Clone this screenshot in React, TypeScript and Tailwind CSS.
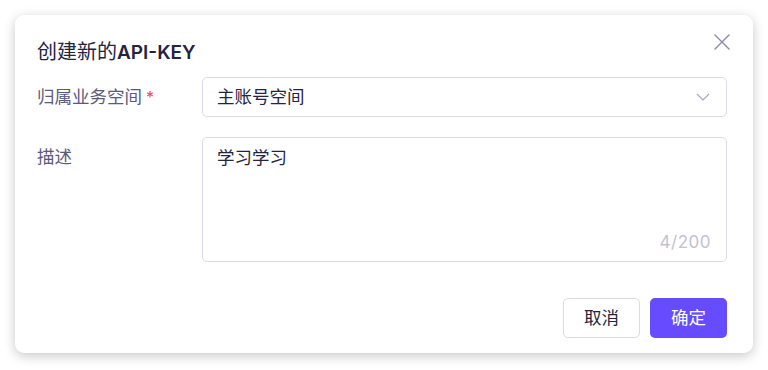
import { useState } from 'react';

export default function App() {
  const [desc, setDesc] = useState('学习学习');

  return (
    <div className="w-[768px] h-[370px] bg-white pt-[15px] pl-[15px] font-['Inter','Noto_Sans_CJK_SC',sans-serif]">
      {/* Dialog */}
      <div className="relative w-[738px] h-[338px] rounded-[9px] bg-white shadow-[0_3px_12px_rgba(0,0,0,0.22)] pl-[22px] pr-[26px] pt-[22px] flex flex-col">
        <button className="absolute right-[23px] top-[19px] w-[16px] h-[16px] text-[#8b8aa8]">
          <svg viewBox="0 0 16 16" className="w-[16px] h-[16px]" fill="none" stroke="currentColor" strokeWidth="1.4" strokeLinecap="round">
            <path d="M1 1L15 15M15 1L1 15" />
          </svg>
        </button>

        <h2 className="h-[30px] text-[20px] leading-[30px] text-[#25243f] font-normal">
          创建新的<span className="font-semibold text-[19px]">API-KEY</span>
        </h2>

        {/* workspace row */}
        <div className="flex items-center mt-[10px]">
          <label className="w-[165px] text-[17.5px] text-[#5b5a7a]">
            归属业务空间<span className="text-[#f5475b] ml-[4px] text-[16px]">*</span>
          </label>
          <div className="flex-1 h-[40px] rounded-[5px] border border-[#dcdaea] flex items-center justify-between pl-[14px] pr-[16px]">
            <span className="text-[17.5px] text-[#25243f]">主账号空间</span>
            <svg viewBox="0 0 14 8" className="w-[14px] h-[8px] text-[#a9a8c4]" fill="none" stroke="currentColor" strokeWidth="1.2">
              <path d="M1 1L7 7L13 1" />
            </svg>
          </div>
        </div>

        {/* description row */}
        <div className="flex items-start mt-[20px]">
          <label className="w-[165px] text-[17.5px] text-[#5b5a7a] leading-[24px] pt-[8px]">描述</label>
          <div className="relative flex-1 h-[125px] rounded-[5px] border border-[#dcdaea]">
            <textarea
              value={desc}
              onChange={(e) => setDesc(e.target.value)}
              maxLength={200}
              className="w-full h-full resize-none outline-none bg-transparent px-[14px] pt-[8px] text-[17.5px] leading-[24px] text-[#25243f]"
            />
            <span className="absolute right-[15px] bottom-[6px] text-[17px] tracking-[0.5px] text-[#c3c2d4]">{desc.length}/200</span>
          </div>
        </div>

        {/* footer */}
        <div className="flex justify-end gap-[10px] mt-[36px]">
          <button className="w-[77px] h-[40px] rounded-[5px] border border-[#dcdaea] bg-white text-[17.5px] text-[#25243f]">取消</button>
          <button className="w-[77px] h-[40px] rounded-[5px] bg-[#674cff] text-[17.5px] text-white">确定</button>
        </div>
      </div>
    </div>
  );
}
